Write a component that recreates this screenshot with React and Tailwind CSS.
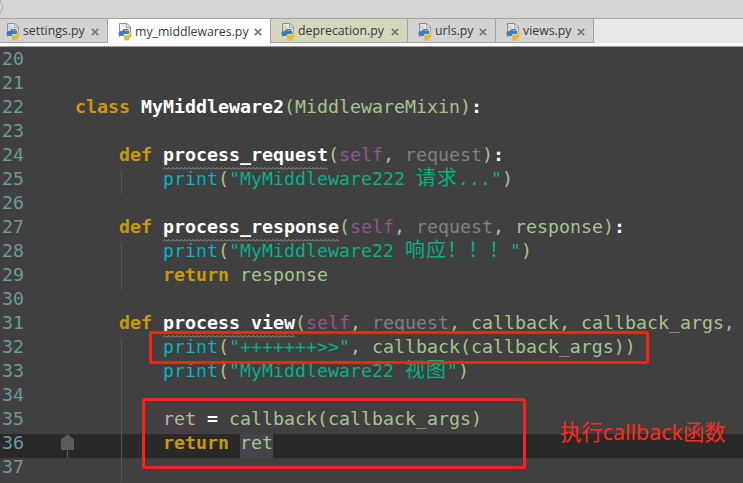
const kw = 'font-bold text-[#c9980a]';
const fn = 'font-bold text-white';
const builtin = 'text-[#05b5c2]';
const str = 'text-[#05b088]';
const self = 'text-[#94558d]';
const unused = 'text-[#808080]';
const colon = 'font-bold text-white';

const tabs = [
  { name: 'settings.py', w: 'w-[108px]', pad: 'pl-[6px]', bg: 'bg-[#d2d2d2]' },
  { name: 'my_middlewares.py', w: 'w-[163px]', pad: 'pl-[10px]', bg: 'bg-white', active: true },
  { name: 'deprecation.py', w: 'w-[137px]', pad: 'pl-[10px]', bg: 'bg-[#d6d5bd]' },
  { name: 'urls.py', w: 'w-[88px]', pad: 'pl-[10px]', bg: 'bg-[#d2d2d2]' },
  { name: 'views.py', w: 'w-[98px]', pad: 'pl-[10px]', bg: 'bg-[#d2d2d2]' },
];

function PyIcon() {
  return (
    <svg width="14" height="18" viewBox="0 0 14 18" className="shrink-0">
      <path d="M1.5 .5H9L12.5 4V10M1.5 .5V14" fill="#e8e8e8" stroke="#8f8f8f" />
      <path d="M8.5 .5V4.5H12.5" fill="none" stroke="#a5a5a5" />
      <path d="M4 9.5C4 6.5 5 6 7 6H10C10.8 6 10.8 7 10 7H6.6V7.6H10.2C11 7.6 11 8.2 11 9V11H7.5C6.2 11 5.6 11.6 5.6 13H3.2C1.5 13 .5 12.2 .5 10.5C.5 8.8 1.5 8 3 8H7.2V9.5Z" fill="#3d7fb5" />
      <path d="M13.5 11C13.5 14 12.4 15 11.5 15V16C11.5 17 10.5 17.6 9 17.6C7.5 17.6 6 17 6 16V13.6C6 12.6 6.8 12 7.8 12H11.4V8.2H12.4C13.2 8.2 13.5 9.4 13.5 11Z" fill="#eab92c" />
    </svg>
  );
}

function Tab({ tab }) {
  return (
    <div className={`flex items-center ${tab.w} ${tab.bg} ${tab.pad} h-full border-r border-[#a3a3a3] pt-[2px] ${tab.active ? '' : 'border-b border-b-[#a3a3a3]'}`}>
      <PyIcon />
      <span className="ml-[3px] text-[12.3px] text-[#3a3a3a] font-['Open_Sans','Noto_Sans',sans-serif]">{tab.name}</span>
      <svg width="8" height="8" viewBox="0 0 8 8" className="ml-auto mr-[8px] shrink-0">
        <path d="M.8 .8L7.2 7.2M7.2 .8L.8 7.2" stroke="#7c7c7c" strokeWidth="1.8" />
      </svg>
    </div>
  );
}

function Row({ n, guide, current, children }) {
  return (
    <div className={`relative flex h-6 ${current ? 'bg-[#292929]' : ''}`}>
      <div className="w-[75px] shrink-0 pl-[2px] text-[#6a9a9e]">{n}</div>
      {guide && <div className="absolute left-[121px] top-0 h-6 w-px bg-[#555555]" />}
      <div className="relative whitespace-pre">{children}</div>
    </div>
  );
}

// the inspection's fine zigzag under a method name
function Warned({ id, children }) {
  return (
    <span className={`relative inline-block ${fn}`}>
      {children}
      <svg className="absolute left-0 top-[21px] h-[3px] w-full">
        <defs>
          <pattern id={id} width="4" height="3" patternUnits="userSpaceOnUse">
            <path d="M0 2.5L2 .5L4 2.5" fill="none" stroke="#a0a0a0" strokeWidth="0.9" />
          </pattern>
        </defs>
        <rect width="100%" height="3" fill={`url(#${id})`} />
      </svg>
    </span>
  );
}

const Cjk = ({ children }) => <span className="font-['Noto_Sans_CJK_SC',sans-serif] text-[20px] leading-[0] tracking-[1px]">{children}</span>;

export default function App() {
  return (
    <div className="relative h-[483px] w-[743px] overflow-hidden bg-[#404040]">
      <div className="relative h-[18px] bg-[#d5d5d5]">
        <svg width="5" height="14" viewBox="0 0 5 14" className="absolute left-0 top-0">
          <path d="M0 0L3 7L0 14" fill="none" stroke="#b0b0b0" />
        </svg>
      </div>
      <div className="flex h-[25px] items-stretch border-t border-[#a3a3a3] bg-[#e8e8e8]">
        {tabs.map((t) => <Tab key={t.name} tab={t} />)}
      </div>
      <div className="h-[3px] bg-white" />
      <div className="h-px bg-[#9a9a9a]" />

      <div className="pt-[3px] font-['DejaVu_Sans_Mono',monospace] text-[18.27px] leading-[17px] text-[#a6c48f]">
        <Row n="20" />
        <Row n="21" />
        <Row n="22">
          <span className={kw}>class</span> <span className={fn}>MyMiddleware2</span>(MiddlewareMixin)<span className={colon}>:</span>
        </Row>
        <Row n="23" />
        <Row n="24">
          {'    '}<span className={kw}>def</span> <Warned id="warn-request">process_request</Warned>(<span className={self}>self</span>, <span className={unused}>request</span>)<span className={colon}>:</span>
        </Row>
        <Row n="25" guide>
          {'        '}<span className={builtin}>print</span>(<span className={str}>"MyMiddleware222 <Cjk>请求</Cjk>..."</span>)
        </Row>
        <Row n="26" />
        <Row n="27">
          {'    '}<span className={kw}>def</span> <Warned id="warn-response">process_response</Warned>(<span className={self}>self</span>, <span className={unused}>request</span>, response)<span className={colon}>:</span>
        </Row>
        <Row n="28" guide>
          {'        '}<span className={builtin}>print</span>(<span className={str}>"MyMiddleware22 <Cjk>响应！！！</Cjk>"</span>)
        </Row>
        <Row n="29" guide>
          {'        '}<span className={kw}>return</span> response
        </Row>
        <Row n="30" />
        <Row n="31">
          {'    '}<span className={kw}>def</span> <Warned id="warn-view">process_view</Warned>(<span className={self}>self</span>, <span className={unused}>request</span>, callback, callback_args,
        </Row>
        <Row n="32" guide>
          {'        '}<span className={builtin}>print</span>(<span className={str}>"+++++++&gt;&gt;"</span>, callback(callback_args))
        </Row>
        <Row n="33" guide>
          {'        '}<span className={builtin}>print</span>(<span className={str}>"MyMiddleware22 <Cjk>视图</Cjk>"</span>)
        </Row>
        <Row n="34" guide />
        <Row n="35" guide>
          {'        '}<span className="bg-[#4a3d47] inline-block h-6 align-top">ret</span> <span className={colon}>=</span> callback(callback_args)
        </Row>
        <Row n="36" guide current>
          {'        '}<span className={kw}>return</span> <span className="bg-[#45454d] inline-block h-6 align-top">ret</span>
        </Row>
        <Row n="37" guide />
      </div>

      {/* fold marker on the current line */}
      <svg width="14" height="24" viewBox="0 0 14 24" className="absolute left-[61px] top-[434px]">
        <path d="M0 5.5L6.5 0L13 5.5V16H0Z" fill="#5c5c5c" />
        <path d="M6.5 16V24" stroke="#5c5c5c" />
      </svg>

      {/* red annotations drawn over the code */}
      <div className="absolute left-[149px] top-[331px] h-[33px] w-[500px] rounded-[3px] border-[3px] border-[#ff2016]" />
      <div className="absolute left-[142px] top-[398px] h-[71px] w-[384px] rounded-[3px] border-[3px] border-[#ff2016]" />
      <div className="absolute left-[560px] top-[417px] text-[21.4px] leading-[30px] text-[#ff2a1c] font-['Noto_Sans','Noto_Sans_CJK_SC',sans-serif]">执行callback函数</div>
    </div>
  );
}
